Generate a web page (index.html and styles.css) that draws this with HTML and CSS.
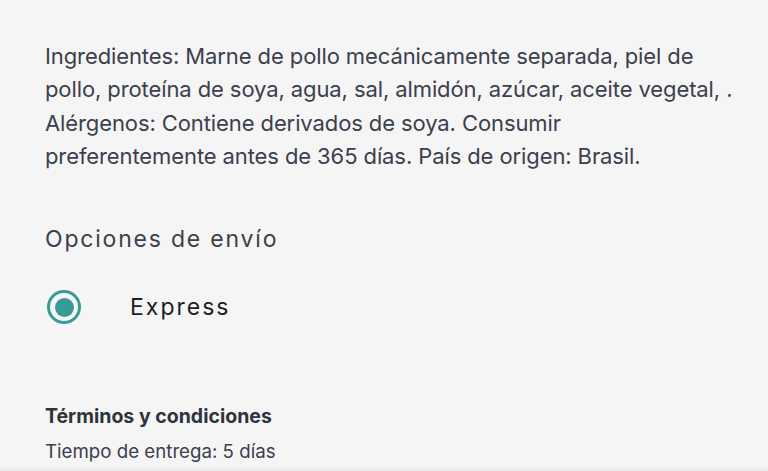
FILE: index.html
```html
<!DOCTYPE html>
<html lang="es">
<head>
<meta charset="utf-8">
<link rel="stylesheet" href="styles.css">
</head>
<body>
<main class="page">
  <p class="desc">Ingredientes: Marne de pollo mecánicamente separada, piel de pollo, proteína de soya, agua, sal, almidón, azúcar, aceite vegetal, .<br>Alérgenos: Contiene derivados de soya. Consumir preferentemente antes de 365 días. País de origen: Brasil.</p>
  <h2 class="section-title">Opciones de envío</h2>
  <label class="option">
    <span class="radio"><span class="radio-dot"></span></span>
    <span class="option-label">Express</span>
  </label>
  <h3 class="terms-title">Términos y condiciones</h3>
  <p class="terms-text">Tiempo de entrega: 5 días</p>
</main>
<div class="bottom-shade"></div>
</body>
</html>
```
FILE: styles.css
```css
html, body {
  margin: 0;
  padding: 0;
  background: #f5f5f5;
  height: 100%;
  overflow: hidden;
}
body {
  font-family: Inter, "Noto Sans", sans-serif;
  color: #3b404c;
}
.page {
  padding: 40px 15px 0 45px;
}
.desc {
  margin: 0;
  font-size: 22px;
  line-height: 33.3px;
  letter-spacing: -0.1px;
  color: #3b404c;
  max-width: 691px;
}
.section-title {
  margin: 52px 0 0 0;
  font-weight: 400;
  font-size: 23px;
  line-height: 28px;
  letter-spacing: 1.8px;
  color: #3b404c;
}
.option {
  display: flex;
  align-items: center;
  margin-top: 34px;
  height: 40px;
}
.radio {
  box-sizing: border-box;
  width: 34px;
  height: 34px;
  margin-left: 2px;
  border: 3.5px solid #3a9a96;
  border-radius: 50%;
  display: flex;
  align-items: center;
  justify-content: center;
}
.radio-dot {
  width: 19px;
  height: 19px;
  border-radius: 50%;
  background: #3a9a96;
}
.option-label {
  margin-left: 49px;
  font-size: 23px;
  letter-spacing: 2px;
  color: #1b1e25;
}
.terms-title {
  margin: 77px 0 0 0;
  font-size: 19.5px;
  font-weight: 700;
  line-height: 24px;
  color: #2f333c;
}
.terms-text {
  margin: 12px 0 0 0;
  font-size: 18.7px;
  line-height: 24px;
  color: #3b404c;
}
.bottom-shade {
  position: fixed;
  left: 0;
  right: 0;
  bottom: 0;
  height: 5px;
  background: linear-gradient(to bottom, rgba(0,0,0,0), rgba(0,0,0,0.05));
}
```
